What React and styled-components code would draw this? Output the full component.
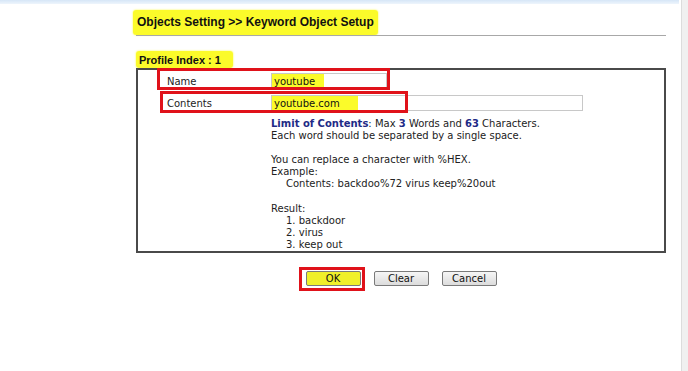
import React from 'react';
import styled, { createGlobalStyle } from 'styled-components';

const GlobalStyle = createGlobalStyle`
  html, body {
    margin: 0;
    padding: 0;
    background: #fff;
  }
  body {
    font-family: 'Liberation Sans', Arial, sans-serif;
    color: #222;
  }
`;

const App = () => {
  const [name, setName] = React.useState('youtube');
  const [contents, setContents] = React.useState('youtube.com');

  return (
    <Page>
      <GlobalStyle />
      <Main>
        <TopBar />
        <Content>
          <Title>
            <Marker>Objects Setting &gt;&gt; Keyword Object Setup</Marker>
          </Title>
          <Rule />
          <ProfileLabel>
            <Marker $pad="3px 12px 2px 3px">Profile Index : 1</Marker>
          </ProfileLabel>
          <Panel>
            <FieldRow $box={{ top: -2, bottom: 2, left: -10, right: 274 }}>
              <FieldLabel>Name</FieldLabel>
              <TextInput
                $width="116px"
                $hl="52px"
                value={name}
                onChange={(e) => setName(e.target.value)}
              />
            </FieldRow>
            <FieldRow $box={{ top: -1, bottom: 1, left: -7, right: 256 }}>
              <FieldLabel>Contents</FieldLabel>
              <TextInput
                $width="312px"
                $hl="86px"
                value={contents}
                onChange={(e) => setContents(e.target.value)}
              />
            </FieldRow>
            <Notes>
              <Line>
                <Em>Limit of Contents</Em>: Max <Em>3</Em> Words and <Em>63</Em> Characters.
              </Line>
              <Line>Each word should be separated by a single space.</Line>
              <Blank />
              <Line>You can replace a character with %HEX.</Line>
              <Line>Example:</Line>
              <Line $indent>Contents: backdoo%72 virus keep%20out</Line>
              <Blank />
              <Line>Result:</Line>
              <Line $indent>1. backdoor</Line>
              <Line $indent>2. virus</Line>
              <Line $indent>3. keep out</Line>
            </Notes>
          </Panel>
          <Buttons>
            <Button $primary>OK</Button>
            <Button>Clear</Button>
            <Button>Cancel</Button>
          </Buttons>
        </Content>
      </Main>
      <ScrollTrack />
    </Page>
  );
};

const Page = styled.div`
  display: flex;
  width: 688px;
  height: 371px;
  overflow: hidden;
`;

const Main = styled.div`
  flex: 1;
  display: flex;
  flex-direction: column;
`;

const TopBar = styled.div`
  height: 4px;
  width: 679px;
  background: linear-gradient(#d6e6f7, #eef5fc);
`;

const ScrollTrack = styled.div`
  width: 6px;
  height: 100%;
  background: #f0f0f0;
  border-left: 1px solid #dcdcdc;
`;

const Content = styled.div`
  width: 530px;
  margin-left: 136px;
  display: flex;
  flex-direction: column;
`;

const Marker = styled.span`
  background: #fbfb2a;
  padding: ${(p) => p.$pad || '5px 4px 6px 4px'};
  border-radius: 3px;
  box-shadow: 0 0 2px #fbfb2a;
`;

const Title = styled.h1`
  margin: 10px 0 0 -3px;
  height: 16px;
  font-size: 12px;
  font-weight: 700;
  color: #111;
  line-height: 16px;
`;

const Rule = styled.div`
  height: 1px;
  background: #a8a8a8;
  margin-top: 5px;
`;

const ProfileLabel = styled.div`
  margin-top: 16px;
  height: 16px;
  font-size: 11px;
  font-weight: 700;
  color: #111;
  line-height: 16px;
`;

const Panel = styled.div`
  border: 2px solid #4a4a4a;
  height: 181px;
  padding-left: 29px;
  font-family: 'DejaVu Sans', Verdana, sans-serif;
  font-size: 10px;
  color: #222;
`;

const FieldRow = styled.div`
  position: relative;
  display: flex;
  align-items: center;
  height: 22px;

  &::after {
    content: '';
    position: absolute;
    top: ${(p) => p.$box.top}px;
    bottom: ${(p) => p.$box.bottom}px;
    left: ${(p) => p.$box.left}px;
    right: ${(p) => p.$box.right}px;
    border: 3px solid #e0121a;
    pointer-events: none;
  }
`;

const FieldLabel = styled.span`
  width: 104px;
`;

const TextInput = styled.input`
  box-sizing: border-box;
  width: ${(p) => p.$width};
  height: 16px;
  border: 1px solid #c8c8c8;
  padding: 0 2px;
  font-family: 'DejaVu Sans', Verdana, sans-serif;
  font-size: 10px;
  color: #111;
  background: linear-gradient(90deg, #fbfb2a ${(p) => p.$hl}, #fff ${(p) => p.$hl});
  outline: none;
`;

const Notes = styled.div`
  margin: 4px 0 0 104px;
  line-height: 12.1px;
`;

const Line = styled.div`
  padding-left: ${(p) => (p.$indent ? '15px' : '0')};
  white-space: nowrap;
`;

const Blank = styled.div`
  height: 12.1px;
`;

const Em = styled.b`
  color: #1e2a86;
`;

const Buttons = styled.div`
  display: flex;
  justify-content: center;
  gap: 13px;
  margin-top: 18px;
`;

const Button = styled.button`
  position: relative;
  width: 55px;
  height: 15px;
  padding: 0;
  border: 1px solid #7a7a7a;
  border-radius: 2px;
  font-family: 'DejaVu Sans', Verdana, sans-serif;
  font-size: 10px;
  color: #111;
  background: ${(p) =>
    p.$primary ? '#f0f02a' : 'linear-gradient(#f6f6f6, #dcdcdc)'};

  ${(p) =>
    p.$primary &&
    `
    &::after {
      content: '';
      position: absolute;
      inset: -5px -5px -6px -8px;
      border: 3px solid #e0121a;
    }
  `}
`;

export default App;
